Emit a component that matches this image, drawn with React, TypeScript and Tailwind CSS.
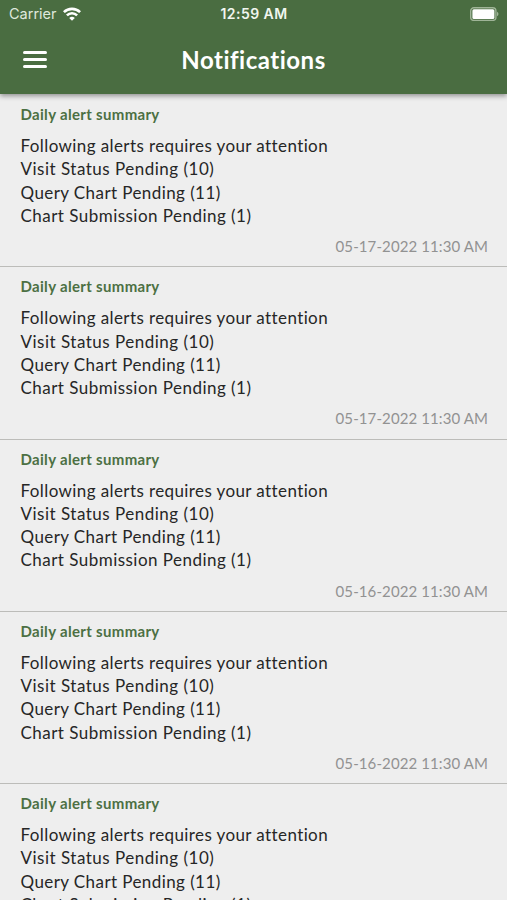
const alerts = [
  { id: 1, date: "05-17-2022 11:30 AM" },
  { id: 2, date: "05-17-2022 11:30 AM" },
  { id: 3, date: "05-16-2022 11:30 AM" },
  { id: 4, date: "05-16-2022 11:30 AM" },
  { id: 5 },
];

function StatusBar() {
  return (
    <div className="grid h-[27px] grid-cols-3 items-center pl-[9px] pr-[8px] font-['Inter',sans-serif]">
      <div className="flex items-center gap-[6px]">
        <span className="text-[14.5px] text-[#dfe8dc]">Carrier</span>
        <svg className="h-[14px] w-[18px]" viewBox="0 0 18 14" fill="none" stroke="white" strokeWidth="2.6">
          <path d="M.9 5.2a11.5 11.5 0 0 1 16.2 0" />
          <path d="M3.9 8.3a7.2 7.2 0 0 1 10.2 0" />
          <path d="M9 13.8 6.2 11a4 4 0 0 1 5.6 0z" fill="white" stroke="none" />
        </svg>
      </div>
      <span className="whitespace-nowrap text-center text-[14px] font-semibold tracking-[0.45px] text-[#f1f6ef]">12:59 AM</span>
      <svg className="h-[14px] w-[30px] justify-self-end" viewBox="0 0 30 14">
        <rect x="1.7" y=".8" width="25.2" height="12.6" rx="3.2" fill="none" stroke="#9fb497" strokeWidth="1.4" />
        <rect x="3.4" y="2.2" width="22" height="9.8" rx="1.5" fill="white" />
        <path d="M28 4.7c2 1 2 3.6 0 4.6z" fill="#9fb497" />
      </svg>
    </div>
  );
}

function Header() {
  return (
    <header className="relative z-10 h-[94px] shrink-0 bg-[#4a6d41] shadow-[0_2px_5px_rgba(0,0,0,0.4)]">
      <StatusBar />
      <div className="grid h-[65px] grid-cols-[80px_1fr_80px] items-center">
        <button className="ml-[23px] flex w-6 flex-col gap-[4px]" aria-label="Menu">
          <span className="h-[3px] w-full rounded-full bg-white" />
          <span className="h-[3px] w-full rounded-full bg-white" />
          <span className="h-[3px] w-full rounded-full bg-white" />
        </button>
        <h1 className="text-center text-[24px] font-bold tracking-[0.5px] text-white">Notifications</h1>
      </div>
    </header>
  );
}

function AlertItem({ date }: { date?: string }) {
  return (
    <li className="h-[172.25px] shrink-0 border-b border-[#bcbcb9] pl-[20.5px] pr-[19px] pt-[8px]">
      <h2 className="text-[15px] font-bold leading-[22px] tracking-[0.32px] text-[#4c7043]">Daily alert summary</h2>
      <div className="mt-[9px] text-[17px] leading-[23.25px] text-[#262626]">
        <p className="tracking-[0.4px]">Following alerts requires your attention</p>
        <p className="tracking-[0.5px]">Visit Status Pending (10)</p>
        <p className="tracking-[0.42px]">Query Chart Pending (11)</p>
        <p className="tracking-[0.47px]">Chart Submission Pending (1)</p>
      </div>
      {date && (
        <p className="mt-[9px] text-right text-[15px] leading-[20px] tracking-[0.1px] text-[#929292]">{date}</p>
      )}
    </li>
  );
}

export default function App() {
  return (
    <div className="flex h-[900px] w-full flex-col overflow-hidden bg-[#eeeeee] font-['Lato',sans-serif]">
      <Header />
      <ul className="flex min-h-0 flex-1 flex-col overflow-hidden pt-[1px]">
        {alerts.map((alert) => (
          <AlertItem key={alert.id} date={alert.date} />
        ))}
      </ul>
    </div>
  );
}
